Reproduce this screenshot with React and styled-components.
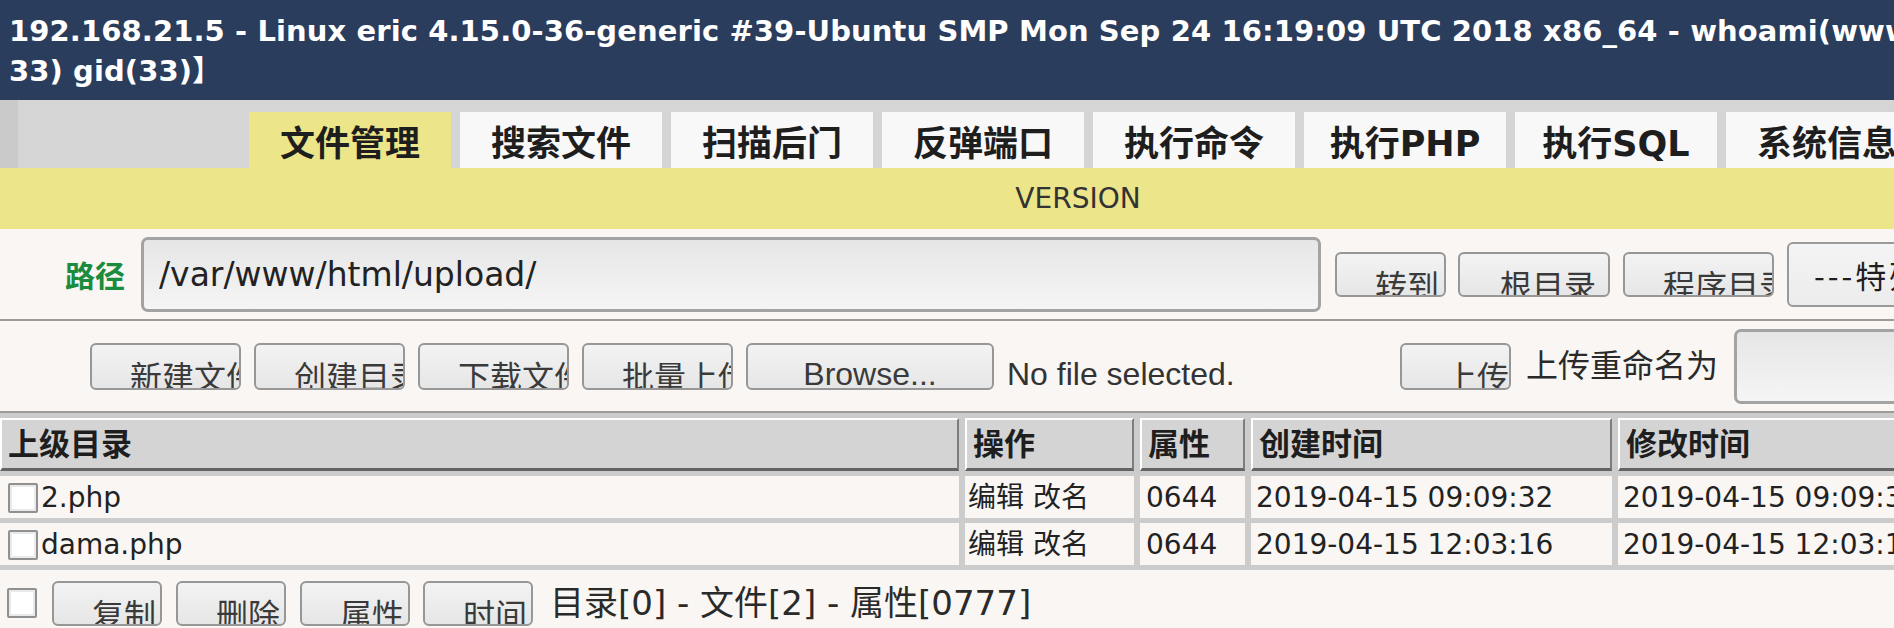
import React from "react";
import styled, { createGlobalStyle } from "styled-components";

const GlobalStyle = createGlobalStyle`
	html, body {
		margin: 0;
		padding: 0;
		background: #f9f6f3;
		overflow: hidden;
	}
	body {
		font-family: "DejaVu Sans", "Noto Sans CJK SC", sans-serif;
	}
`;

const Page = styled.div`
	width: 2156px;
	background: #f9f6f3;
	color: #222;
`;

const Header = styled.div`
	height: 100px;
	box-sizing: border-box;
	padding: 11px 0 0 9px;
	background: #2b3d5c;
	color: #ffffff;
	font: bold 29px/40px "DejaVu Sans", "Noto Sans CJK SC", sans-serif;
	letter-spacing: 0.1px;
	white-space: nowrap;
	overflow: hidden;
`;

const TabBar = styled.div`
	display: flex;
	gap: 9px;
	height: 68px;
	box-sizing: border-box;
	padding: 12px 0 0 231px;
	background: #d5d5d5;
	border-left: 18px solid #cacaca;
`;

const Tab = styled.div`
	display: flex;
	align-items: center;
	justify-content: center;
	flex: none;
	width: 202px;
	height: 56px;
	box-sizing: border-box;
	padding-top: 8px;
	background: ${(p) => (p.$active ? "#ece589" : "#f8f8f8")};
	color: #1e1e1e;
	font: bold 35px/1 "DejaVu Sans", "Noto Sans CJK SC", sans-serif;
`;

const VersionBand = styled.div`
	display: flex;
	align-items: center;
	justify-content: center;
	height: 61px;
	background: #ece589;
	color: #333;
	font: 28px/1 "DejaVu Sans", sans-serif;
`;

const Row = styled.div`
	display: flex;
	align-items: center;
	height: 90px;
	padding-left: ${(p) => p.$indent}px;
	border-bottom: 2px solid #9b9b9b;
	background: #f9f6f3;
`;

const PathLabel = styled.span`
	flex: none;
	margin-right: 16px;
	color: #1b8c3d;
	font: bold 30px/1 "Noto Sans CJK SC", sans-serif;
`;

const TextInput = styled.input`
	flex: none;
	width: ${(p) => p.$w}px;
	height: 75px;
	box-sizing: border-box;
	margin-right: ${(p) => p.$gap || 0}px;
	padding: 0 0 0 15px;
	border: 3px solid #a3a3a3;
	border-radius: 7px;
	background: linear-gradient(#e6e6e6, #f5f5f5);
	color: #222;
	font: 33px "DejaVu Sans", sans-serif;
	outline: none;
`;

const Button = styled.button`
	display: flex;
	align-items: flex-start;
	justify-content: ${(p) => (p.$center ? "center" : "flex-start")};
	flex: none;
	width: ${(p) => p.$w}px;
	height: ${(p) => p.$h || 45}px;
	box-sizing: border-box;
	margin-right: ${(p) => p.$gap ?? 13}px;
	padding: ${(p) => (p.$center ? 13 : 14)}px 0 0 ${(p) => (p.$center ? 0 : p.$pad || 38)}px;
	border: 2px solid #979797;
	border-radius: 6px;
	background: linear-gradient(#f3f3f3, #e6e6e6);
	color: #3a3a3a;
	font: ${(p) => (p.$latin ? '32px/1 "Liberation Sans", sans-serif' : '32px/1 "Noto Sans CJK SC", sans-serif')};
	white-space: nowrap;
	overflow: hidden;
`;

const SelectBox = styled.div`
	display: flex;
	align-items: center;
	flex: none;
	width: 300px;
	height: 65px;
	box-sizing: border-box;
	padding-left: 25px;
	border: 2px solid #9a9a9a;
	border-radius: 6px;
	background: linear-gradient(#f4f4f4, #ececec);
	color: #1e1e1e;
	font: 31px/1 "Noto Sans CJK SC", sans-serif;
	letter-spacing: 3px;
	white-space: nowrap;
	overflow: hidden;
`;

const FileField = styled.div`
	display: flex;
	align-items: baseline;
	flex: none;
	width: 641px;
	margin-right: 13px;
`;

const FileNote = styled.span`
	color: #333;
	font: 32px/1 "Liberation Sans", sans-serif;
`;

const PlainText = styled.span`
	flex: none;
	margin-right: ${(p) => p.$gap || 0}px;
	color: #2a2a2a;
	font: ${(p) => p.$size || 32}px/1 "DejaVu Sans", "Noto Sans CJK SC", sans-serif;
`;

const Table = styled.div`
	display: grid;
	grid-template-columns: 959px 169px 105px 361px 1fr;
	column-gap: 6px;
	row-gap: 5px;
	padding: 5px 0;
	background: #cccccc;
`;

const HeadCell = styled.div`
	display: flex;
	align-items: center;
	height: 53px;
	box-sizing: border-box;
	padding-left: 6px;
	background: #d4d4d4;
	border-top: 2px solid #ffffff;
	border-left: 2px solid #ffffff;
	border-right: 2px solid #7d7d7d;
	border-bottom: 3px solid #646464;
	color: #1e1e1e;
	font: bold 31px/1 "DejaVu Sans", "Noto Sans CJK SC", sans-serif;
	white-space: nowrap;
	overflow: hidden;
`;

const Cell = styled.div`
	display: flex;
	align-items: center;
	gap: 3px;
	height: 42px;
	padding: 2px 0 0 ${(p) => p.$pad ?? 5}px;
	box-sizing: border-box;
	background: #f9f6f3;
	color: #222;
	font: 28px/1 "DejaVu Sans", "Noto Sans CJK SC", sans-serif;
	white-space: nowrap;
	overflow: hidden;
`;

const Check = styled.span`
	display: inline-block;
	flex: none;
	width: 30px;
	height: 30px;
	box-sizing: border-box;
	margin-right: ${(p) => p.$gap || 0}px;
	border: 2px solid #909090;
	border-radius: 2px;
	background: #ffffff;
	box-shadow: inset 0 0 0 2px #e9e9e9;
`;

const Footer = styled.div`
	display: flex;
	align-items: center;
	height: 66px;
	padding-left: 7px;
	background: #f9f6f3;
`;

const tabs = ["文件管理", "搜索文件", "扫描后门", "反弹端口", "执行命令", "执行PHP", "执行SQL", "系统信息"];

const files = [
	{ name: "2.php", created: "2019-04-15 09:09:32", modified: "2019-04-15 09:09:32" },
	{ name: "dama.php", created: "2019-04-15 12:03:16", modified: "2019-04-15 12:03:16" },
];

const App = () => (
	<Page>
		<GlobalStyle />
		<Header>
			192.168.21.5 - Linux eric 4.15.0-36-generic #39-Ubuntu SMP Mon Sep 24 16:19:09 UTC 2018 x86_64 - whoami(www-data) - 【uid(
			<br />
			33) gid(33)】
		</Header>

		<TabBar>
			{tabs.map((t, i) => (
				<Tab key={t} $active={i === 0}>{t}</Tab>
			))}
		</TabBar>

		<VersionBand>VERSION</VersionBand>

		<Row $indent={65}>
			<PathLabel>路径</PathLabel>
			<TextInput $w={1180} $gap={14} defaultValue="/var/www/html/upload/" />
			<Button $w={111} $gap={12}>转到</Button>
			<Button $w={152} $gap={13} $pad={40}>根目录</Button>
			<Button $w={151} $gap={13}>程序目录</Button>
			<SelectBox>---特殊目录---</SelectBox>
		</Row>

		<Row $indent={90}>
			<Button $w={151} $h={47}>新建文件</Button>
			<Button $w={151} $h={47}>创建目录</Button>
			<Button $w={151} $h={47}>下载文件</Button>
			<Button $w={151} $h={47}>批量上传</Button>
			<FileField>
				<Button $w={248} $h={47} $center $latin>Browse...</Button>
				<FileNote>No file selected.</FileNote>
			</FileField>
			<Button $w={111} $h={47} $gap={15} $pad={43}>上传</Button>
			<PlainText $gap={16}>上传重命名为</PlainText>
			<TextInput $w={320} />
		</Row>

		<Table>
			<HeadCell>上级目录</HeadCell>
			<HeadCell>操作</HeadCell>
			<HeadCell>属性</HeadCell>
			<HeadCell>创建时间</HeadCell>
			<HeadCell>修改时间</HeadCell>
			{files.map((f) => (
				<React.Fragment key={f.name}>
					<Cell $pad={8}>
						<Check />
						{f.name}
					</Cell>
					<Cell $pad={3}>编辑 改名</Cell>
					<Cell $pad={6}>0644</Cell>
					<Cell>{f.created}</Cell>
					<Cell>{f.modified}</Cell>
				</React.Fragment>
			))}
		</Table>

		<Footer>
			<Check $gap={15} />
			<Button $w={110} $gap={14}>复制</Button>
			<Button $w={110} $gap={14}>删除</Button>
			<Button $w={110} $gap={13}>属性</Button>
			<Button $w={110} $gap={17}>时间</Button>
			<PlainText $size={34}>目录[0] - 文件[2] - 属性[0777]</PlainText>
		</Footer>
	</Page>
);

export default App;
